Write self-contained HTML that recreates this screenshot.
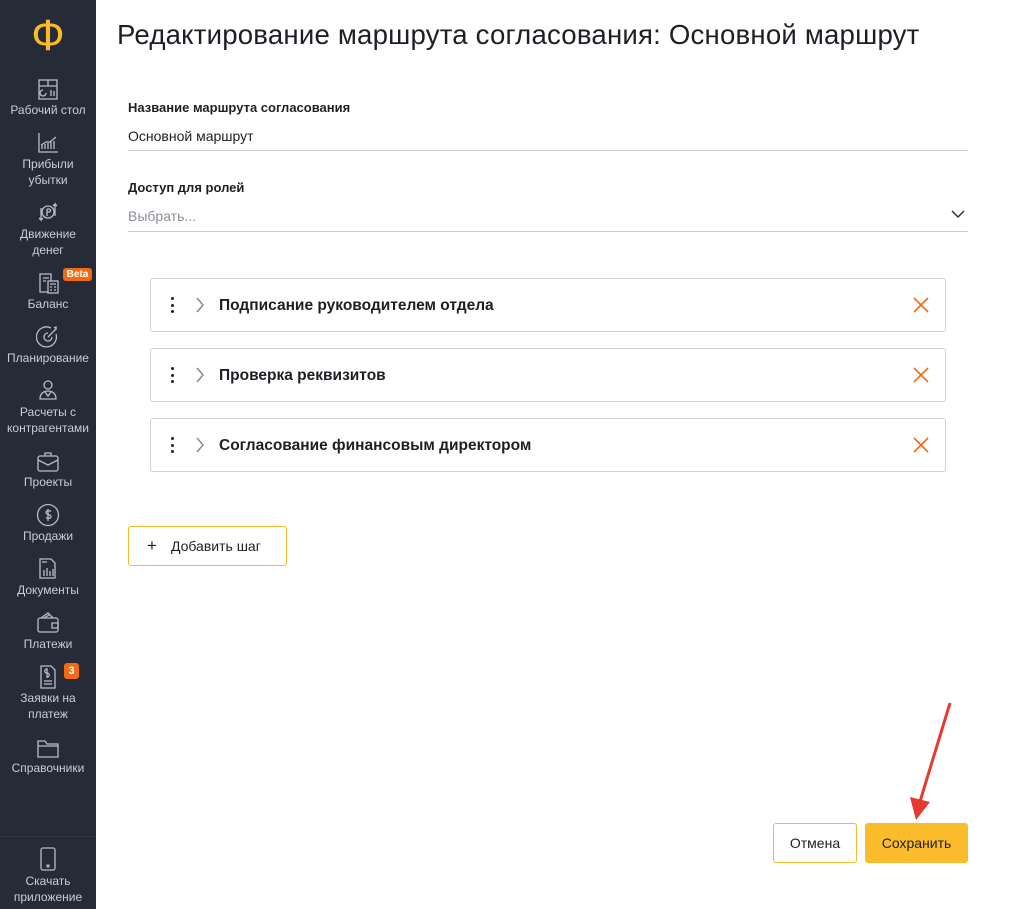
<!DOCTYPE html>
<html><head><meta charset="utf-8"><style>
*{box-sizing:border-box;margin:0;padding:0}
body{width:1019px;height:909px;background:#fff;font-family:"Liberation Sans","DejaVu Sans",sans-serif;position:relative;overflow:hidden;color:#1d1f24}
#sb{position:absolute;left:0;top:0;width:96px;height:909px;background:#262b38}
.lb{position:absolute;left:0;width:96px;text-align:center;color:#c9cdd6;font-size:12px;line-height:16px}
.ic{position:absolute;left:36px;width:24px;height:24px}
.ic svg{width:24px;height:24px;fill:none;stroke:#b8bcc6;stroke-width:1.3}
.a{position:absolute}
h1{position:absolute;left:117px;top:19px;font-size:27.6px;font-weight:normal;color:#1d1f24;letter-spacing:.2px}
.fl{position:absolute;left:128px;font-size:13px;font-weight:bold}
.fv{position:absolute;left:128px;font-size:14px}
.ln{position:absolute;left:128px;width:840px;height:1px;background:#c9ccd2}
.step{position:absolute;left:150px;width:796px;height:54px;border:1px solid #cfd2d8;border-radius:3px}
.step .t{position:absolute;left:68px;top:18px;font-size:15.5px;font-weight:bold}
.step .d{position:absolute;left:20px;top:18px;width:3px;height:16px}
.step .d i{display:block;width:3px;height:3px;background:#222;border-radius:50%;margin-bottom:3.5px}
.btn{position:absolute;border-radius:3px;font-size:14px;text-align:center}
</style></head><body>
<div id="sb">
<div class="a" style="left:0;top:14px;width:96px;text-align:center;color:#f9b92a;font-size:44px;line-height:44px">Ф</div>
<div class="ic" style="top:78px"><svg viewBox="0 0 24 24"><rect x="3" y="2" width="18" height="19"/><path d="M3 8h18M12 2v6M7 12a3 3 0 1 0 3 3M15 12v6M18 13v5"/></svg></div>
<div class="lb" style="top:102px">Рабочий стол</div>
<div class="ic" style="top:131px"><svg viewBox="0 0 24 24"><path d="M3 2v19h19M6 18v-4M9 18v-5M12 18v-6M15 18v-7M18 18v-8M5 14l5-3 4 0 6-5"/></svg></div>
<div class="lb" style="top:156px">Прибыли<br>убытки</div>
<div class="ic" style="top:200px"><svg viewBox="0 0 24 24"><circle cx="12" cy="12" r="6"/><path d="M11 9h2a1.5 1.5 0 0 1 0 3h-2v-3M11 12v4M19 16V4l-2 2M19 4l2 2M5 8v12l-2-2M5 20l2-2"/></svg></div>
<div class="lb" style="top:226px">Движение<br>денег</div>
<div class="ic" style="top:271px"><svg viewBox="0 0 24 24"><path d="M4 3h11v18H4zM7 7h6M7 10h3"/><rect x="12" y="10" width="10" height="12" fill="#262b38"/><path d="M14 13h6M14 16h2M18 16h2M14 19h2M18 19h2"/></svg></div>
<div class="a" style="left:63px;top:268px;width:29px;height:13px;background:#f26a13;border-radius:3px;color:#fff;font-size:10px;font-weight:bold;text-align:center;line-height:13px">Beta</div>
<div class="lb" style="top:296px">Баланс</div>
<div class="ic" style="top:325px"><svg viewBox="0 0 24 24"><path d="M20 9A10 10 0 1 1 15 3"/><path d="M16 12a4 4 0 1 1-4-4M12 12l8-8M18 3l2-1v3"/></svg></div>
<div class="lb" style="top:350px">Планирование</div>
<div class="ic" style="top:378px"><svg viewBox="0 0 24 24"><circle cx="12" cy="7" r="4"/><path d="M4 21c0-5 3-8 8-8s8 3 8 8zM9 14l3 4 3-4"/></svg></div>
<div class="lb" style="top:404px">Расчеты с<br>контрагентами</div>
<div class="ic" style="top:450px"><svg viewBox="0 0 24 24"><rect x="2" y="6" width="20" height="15" rx="2"/><path d="M9 6V3h6v3M2 10l10 5 10-5"/></svg></div>
<div class="lb" style="top:474px">Проекты</div>
<div class="ic" style="top:503px"><svg viewBox="0 0 24 24"><circle cx="12" cy="12" r="10.5"/><path d="M15 8.5c-1-1-5-1.5-5 1s5 1.5 5 4-4 2-5 1M12 6v12"/></svg></div>
<div class="lb" style="top:528px">Продажи</div>
<div class="ic" style="top:556px"><svg viewBox="0 0 24 24"><path d="M4 3h11l4 4v15H4zM6 6h5M8 20v-6M11 20v-8M14 20v-5M17 20v-7"/></svg></div>
<div class="lb" style="top:582px">Документы</div>
<div class="ic" style="top:610px"><svg viewBox="0 0 24 24"><rect x="2" y="8" width="20" height="14" rx="2"/><path d="M5 8l7-5 5 5M8 8l5-3M16 13h6v5h-6z"/></svg></div>
<div class="lb" style="top:636px">Платежи</div>
<div class="ic" style="top:665px"><svg viewBox="0 0 24 24"><path d="M5 1h10l4 4v18H5zM11 4c-3 0-3 4 0 4s3 4 0 4M11 3v10M8 16h8M8 19h8"/></svg></div>
<div class="a" style="left:64px;top:663px;width:15px;height:16px;background:#f26a13;border-radius:3px;color:#fff;font-size:11px;font-weight:bold;text-align:center;line-height:16px">3</div>
<div class="lb" style="top:690px">Заявки на<br>платеж</div>
<div class="ic" style="top:736px"><svg viewBox="0 0 24 24"><path d="M2 5h7l2 3h11v13H2zM2 10h20"/></svg></div>
<div class="lb" style="top:760px">Справочники</div>
<div class="a" style="left:0;top:836px;width:96px;height:1px;background:#2f3441"></div>
<div class="ic" style="top:847px"><svg viewBox="0 0 24 24"><rect x="5" y="1" width="14" height="22" rx="2"/><circle cx="12" cy="19" r="1"/></svg></div>
<div class="lb" style="top:873px">Скачать<br>приложение</div>
</div>

<h1>Редактирование маршрута согласования: Основной маршрут</h1>
<div class="fl" style="top:100px">Название маршрута согласования</div>
<div class="fv" style="top:128px">Основной маршрут</div>
<div class="ln" style="top:150px"></div>
<div class="fl" style="top:180px">Доступ для ролей</div>
<div class="fv" style="top:208px;color:#8b8f97">Выбрать...</div>
<svg class="a" style="left:951px;top:209px" width="14" height="10" viewBox="0 0 14 10"><path d="M1 2l6 6 6-6" fill="none" stroke="#333" stroke-width="1.5"/></svg>
<div class="ln" style="top:231px"></div>

<div class="step" style="top:278px"><div class="d"><i></i><i></i><i></i></div><svg class="a" style="left:44px;top:18px" width="10" height="16"><path d="M2 1l6 7-6 7" fill="none" stroke="#888" stroke-width="1.5"/></svg><div class="t">Подписание руководителем отдела</div><svg class="a" style="left:762px;top:18px" width="16" height="16"><path d="M1 1l14 14M15 1L1 15" stroke="#f26a13" stroke-width="1.6"/></svg></div>
<div class="step" style="top:348px"><div class="d"><i></i><i></i><i></i></div><svg class="a" style="left:44px;top:18px" width="10" height="16"><path d="M2 1l6 7-6 7" fill="none" stroke="#888" stroke-width="1.5"/></svg><div class="t">Проверка реквизитов</div><svg class="a" style="left:762px;top:18px" width="16" height="16"><path d="M1 1l14 14M15 1L1 15" stroke="#f26a13" stroke-width="1.6"/></svg></div>
<div class="step" style="top:418px"><div class="d"><i></i><i></i><i></i></div><svg class="a" style="left:44px;top:18px" width="10" height="16"><path d="M2 1l6 7-6 7" fill="none" stroke="#888" stroke-width="1.5"/></svg><div class="t">Согласование финансовым директором</div><svg class="a" style="left:762px;top:18px" width="16" height="16"><path d="M1 1l14 14M15 1L1 15" stroke="#f26a13" stroke-width="1.6"/></svg></div>

<div class="btn" style="left:128px;top:526px;width:159px;height:40px;border:1px solid #f9b92a;line-height:38px;text-align:left;padding-left:18px"><span style="font-size:17px;margin-right:14px">+</span>Добавить шаг</div>

<svg class="a" style="left:900px;top:700px" width="60" height="125"><path d="M50 3L18 108" stroke="#e53a2f" stroke-width="3"/><path d="M10 97L16 120 30 102z" fill="#e53a2f"/></svg>
<div class="btn" style="left:773px;top:823px;width:84px;height:40px;border:1px solid #f9b92a;line-height:38px">Отмена</div>
<div class="btn" style="left:865px;top:823px;width:103px;height:40px;background:#fbbc2c;line-height:40px">Сохранить</div>
</body></html>
